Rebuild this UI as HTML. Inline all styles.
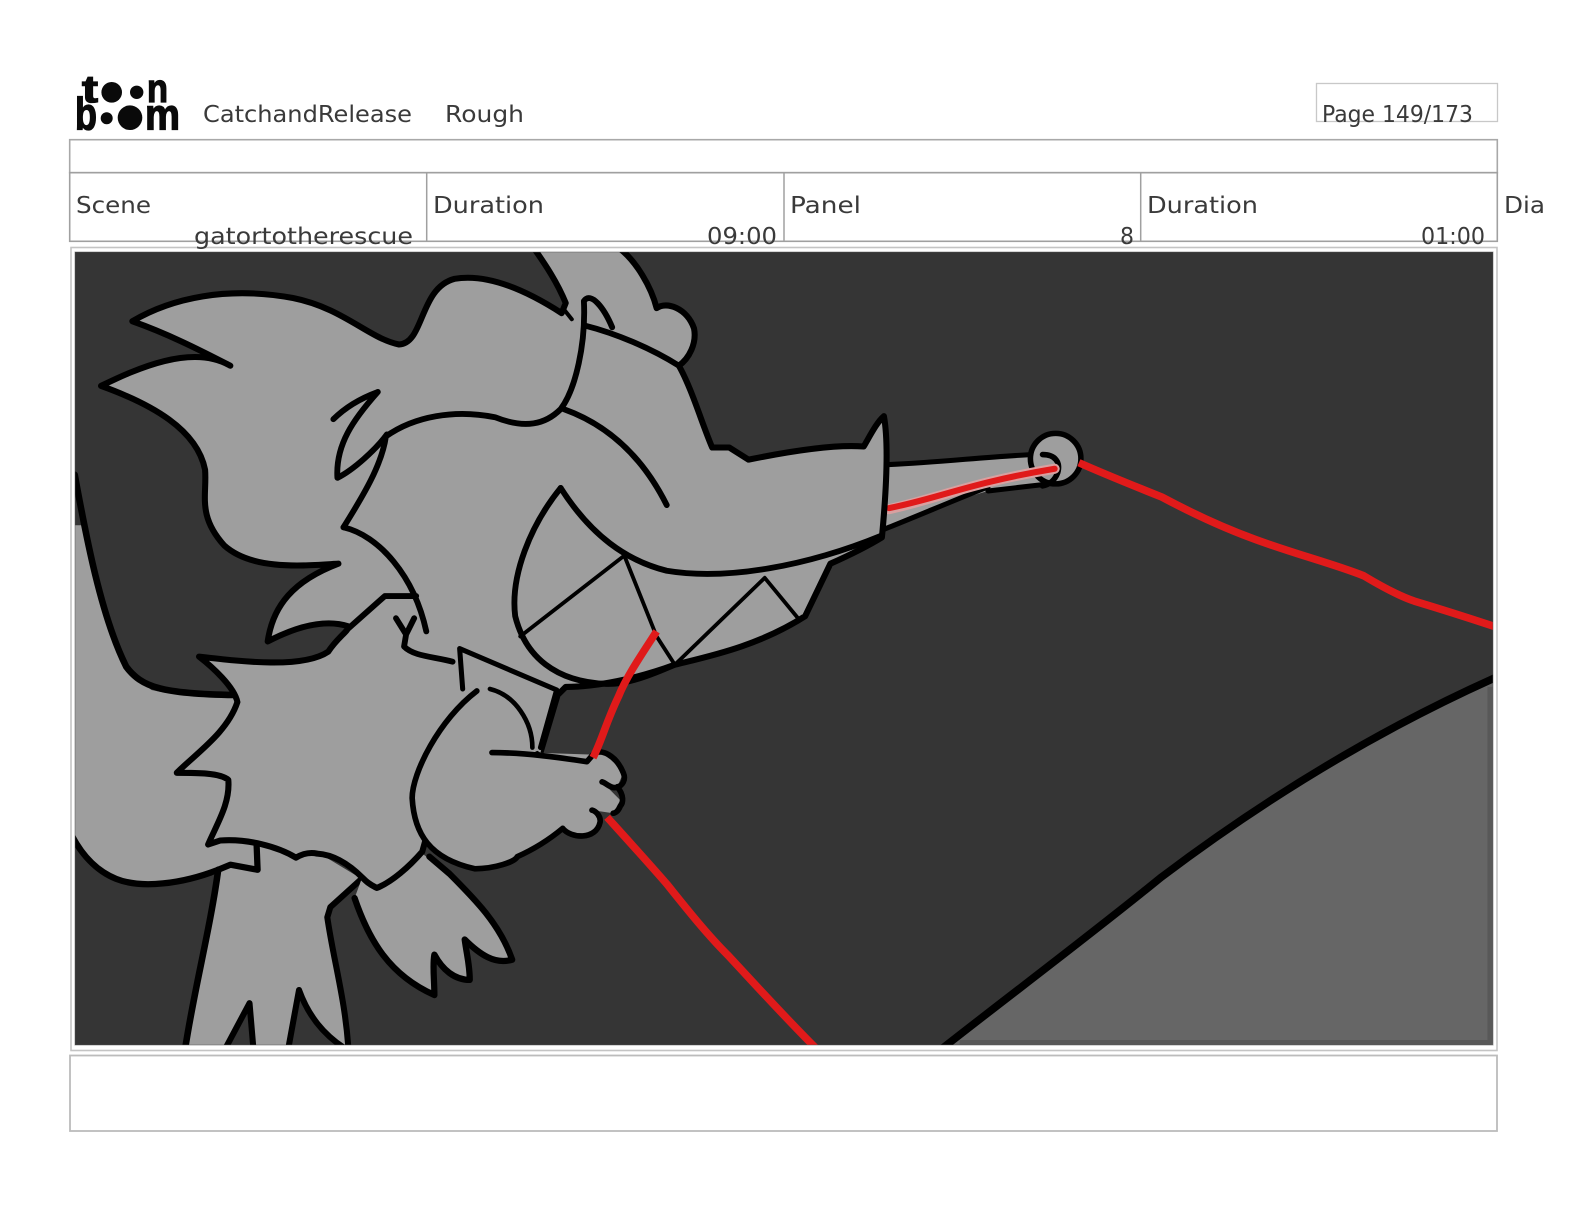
<!DOCTYPE html>
<html><head><meta charset="utf-8"><title>Storyboard page</title>
<style>html,body{margin:0;padding:0;background:#fff;width:1584px;height:1224px;overflow:hidden}svg{display:block}
text{font-family:"Liberation Sans",sans-serif;fill:#3a3a3a;font-size:23px}
.l{font-family:"DejaVu Sans","Liberation Sans",sans-serif;font-size:23px}
.b{font-family:"Liberation Sans",sans-serif;font-weight:bold;fill:#0a0a0a;stroke:#0a0a0a;stroke-width:1.3px}</style></head>
<body>
<svg width="1584" height="1224" viewBox="0 0 1584 1224" xmlns="http://www.w3.org/2000/svg">
<defs><clipPath id="c"><rect x="75" y="252" width="1418" height="793"/></clipPath></defs>
<rect width="1584" height="1224" fill="#fff"/>

<!-- logo -->
<g>
<text class="b" x="82" y="102" style="font-size:38px" textLength="16" lengthAdjust="spacingAndGlyphs">t</text>
<circle cx="111.7" cy="92.3" r="10.3" fill="#0a0a0a"/><circle cx="136.7" cy="92.3" r="6.7" fill="#0a0a0a"/>
<text class="b" x="147" y="102" style="font-size:40px" textLength="21" lengthAdjust="spacingAndGlyphs">n</text>
<text class="b" x="75" y="129.5" style="font-size:45px" textLength="22" lengthAdjust="spacingAndGlyphs">b</text>
<circle cx="106.7" cy="118.3" r="6" fill="#0a0a0a"/><circle cx="130" cy="117.7" r="12.3" fill="#0a0a0a"/>
<text class="b" x="145" y="129.5" style="font-size:44px" textLength="35" lengthAdjust="spacingAndGlyphs">m</text>
</g>

<!-- header boxes -->
<g fill="none">
<rect x="1316.5" y="83.5" width="181" height="38" stroke="#c8c8c8" stroke-width="1.3"/>
<rect x="69.7" y="139.7" width="1427.6" height="33" stroke="#a8a8a8" stroke-width="1.6"/>
<rect x="69.7" y="172.7" width="1427.6" height="68.6" stroke="#a0a0a0" stroke-width="1.6"/>
<path d="M426.7 173V241M784 173V241M1140.7 173V241" stroke="#a0a0a0" stroke-width="1.5"/>
<rect x="71" y="247.5" width="1426" height="803" stroke="#c4c4c4" stroke-width="1.6"/>
<rect x="70" y="1055.5" width="1427" height="75.5" stroke="#bcbcbc" stroke-width="1.8"/>
</g>

<!-- header text -->
<text class="l" x="203" y="122" textLength="209" lengthAdjust="spacingAndGlyphs">CatchandRelease</text>
<text class="l" x="445" y="122" textLength="79" lengthAdjust="spacingAndGlyphs">Rough</text>
<text class="l" x="1322" y="122" textLength="151" lengthAdjust="spacingAndGlyphs">Page 149/173</text>
<text class="l" x="76" y="213" textLength="75" lengthAdjust="spacingAndGlyphs">Scene</text>
<text class="l" x="433" y="213" textLength="111" lengthAdjust="spacingAndGlyphs">Duration</text>
<text class="l" x="790" y="213" textLength="71" lengthAdjust="spacingAndGlyphs">Panel</text>
<text class="l" x="1147" y="213" textLength="111" lengthAdjust="spacingAndGlyphs">Duration</text>
<text class="l" x="1504" y="213" textLength="41" lengthAdjust="spacingAndGlyphs">Dia</text>
<text class="l" x="194" y="244" textLength="219" lengthAdjust="spacingAndGlyphs">gatortotherescue</text>
<text class="l" x="707" y="244" textLength="70" lengthAdjust="spacingAndGlyphs">09:00</text>
<text class="l" x="1120" y="244" textLength="14" lengthAdjust="spacingAndGlyphs">8</text>
<text class="l" x="1421" y="244" textLength="64" lengthAdjust="spacingAndGlyphs">01:00</text>

<!-- artwork -->
<g clip-path="url(#c)">
<rect x="75" y="252" width="1418" height="793" fill="#353535"/>
<g transform="scale(1.0102)" stroke-linejoin="round" stroke-linecap="round">
 <!-- ground -->
 <path d="M930 1040C1000 985 1080 925 1150 868C1260 785 1370 720 1482 670V1040Z" fill="#666" stroke="none"/>
 <path d="M1475 680V1032H950" stroke="#585858" stroke-width="5" fill="none" stroke-linecap="butt"/>
 <path d="M930 1040C1000 985 1080 925 1150 868C1260 785 1370 720 1482 670" fill="none" stroke="#000" stroke-width="7.5"/>

 <!-- left tail -->
 <path d="M70 520H85C95 590 115 660 150 683C180 690 205 688 232 688L260 860L215 865C180 875 140 880 115 870C95 860 80 845 70 825Z" fill="#9e9e9e"/>
 <path d="M74 470C85 530 100 610 125 660C140 680 160 687 232 688" fill="none" stroke="#000" stroke-width="6.5"/>

 <!-- leg -->
 <path d="M216 861C208 920 192 980 183 1040H222L247 993L251 1040H285L296 980C305 1005 320 1025 345 1040C342 990 330 950 324 908L327 898L359 869L373 879L300 835L230 835Z" fill="#9e9e9e"/>
 <path d="M216 861C208 920 192 980 183 1040" fill="none" stroke="#000" stroke-width="6.5"/>
 <path d="M222 1040L247 993L251 1040M285 1040L296 980C305 1005 320 1025 345 1040C342 990 330 950 324 908L327 898L359 869" fill="none" stroke="#000" stroke-width="6"/>
 <path d="M70 825C80 845 95 862 115 870C140 880 180 875 216 861L228 856L255 861L254 836" fill="none" stroke="#000" stroke-width="6.2"/>

 <!-- wing -->
 <path d="M351 889L358 870L375 880L418 845L445 865C470 890 495 915 507 950C490 955 475 945 460 930C462 945 465 955 465 970C450 970 438 960 430 945C428 955 430 970 430 985C385 965 365 930 351 889Z" fill="#9e9e9e"/>
 <path d="M351 889C365 930 385 965 430 985C430 970 428 955 430 945C438 960 450 970 465 970C465 955 462 945 460 930C475 945 490 955 507 950C495 915 470 890 445 865L425 848" fill="none" stroke="#000" stroke-width="6.2"/>

 <!-- rope -->
 <path d="M877 460C930 458 975 452 1022 450L1045 480L978 486C945 495 910 510 875 524Z" fill="#9e9e9e"/>
 <path d="M877 460C930 458 975 452 1022 450M875 524C910 510 945 495 978 482M978 486L1030 480" fill="none" stroke="#000" stroke-width="5"/>
 <circle cx="1045" cy="454" r="25" fill="#9e9e9e" stroke="#000" stroke-width="5.5"/>
 <path d="M1032 450C1045 450 1050 458 1047 468C1044 476 1038 480 1032 481" fill="none" stroke="#000" stroke-width="5.5"/>
 <path d="M880 504C930 493 960 478 1044 464" fill="none" stroke="#d9a0a0" stroke-width="10"/>
 <path d="M880 503C930 493 960 478 1044 464" fill="none" stroke="#e01a1a" stroke-width="6"/>

 <!-- main body -->
 <path d="M131 318C170 295 225 283 290 295C340 305 365 335 395 341C420 340 415 285 450 276C485 270 525 290 556 310L560 300C552 280 540 262 528 245L612 245C630 258 645 285 650 305C660 298 680 305 687 325C690 340 682 355 672 362C685 385 695 420 705 443L722 443L741 455C790 445 830 440 855 442C862 430 868 418 875 412C880 440 877 490 873 532C860 540 840 550 822 558L797 610C750 640 700 650 668 658C630 672 590 680 560 680L552 688L535 745L430 800L418 843C405 858 388 873 373 879C365 875 362 872 359 869C345 855 330 846 314 845C305 843 298 846 293 849C275 838 245 830 218 832L206 836C215 815 228 795 226 772C218 765 195 765 175 765C195 745 225 725 235 695C232 680 210 660 197 650C240 655 300 662 325 645C335 630 345 625 345 620C320 612 290 622 265 635C270 600 290 575 335 558C300 560 250 565 222 540C195 510 205 490 203 465C195 425 150 400 100 382C135 365 190 340 228 362C195 345 165 330 131 318Z" fill="#9e9e9e" stroke="#000" stroke-width="6"/>

 <!-- head lines -->
 <g fill="none" stroke="#000" stroke-width="5.8">
  <path d="M340 522C360 490 378 460 382 432C410 412 450 405 490 413C520 425 540 420 555 405C570 385 580 340 578 298C585 288 598 305 606 324"/>
  <path d="M578 322C610 330 645 345 672 362"/>
  <path d="M558 405C600 420 635 450 660 500"/>
  <path d="M374 388C355 395 340 405 330 415M374 388C350 415 332 440 334 473C350 465 372 445 383 430"/>
  <path d="M340 522C375 530 410 570 422 625"/>
  <path d="M381 590H412M345 622L381 590"/>
  <path d="M392 612L402 628L410 612M402 628L400 640C410 650 430 650 448 655"/>
  <path d="M555 483C525 520 505 570 510 610C520 650 550 675 600 677C620 678 645 668 668 658"/>
  <path d="M555 483C585 530 620 555 660 565C720 575 800 560 873 530"/>
 </g>
 <path d="M558 306L566 316" fill="none" stroke="#000" stroke-width="4"/>
 <g fill="none" stroke="#000" stroke-width="3.8">
  <path d="M515 630L618 550L650 630L668 658L757 572L790 612"/>
 </g>
 <path d="M822 558L797 610" fill="none" stroke="#000" stroke-width="5.5"/>

 <!-- collar and arm -->
 <path d="M455 642L551 683L535 745L458 700Z" fill="#9e9e9e"/>
 <path d="M458 682L455 642L551 683L535 740" fill="none" stroke="#000" stroke-width="5"/>
 <path d="M470 684C430 715 408 770 408 790C410 825 425 850 470 860C490 860 512 848 512 848C530 840 545 830 557 820C565 830 590 830 594 814L586 802L607 805L614 792L596 774L611 779L617 765C610 750 595 740 587 747L527 745C525 710 510 690 485 684Z" fill="#9e9e9e"/>
 <g fill="none" stroke="#000" stroke-width="5.6">
  <path d="M472 684C435 712 408 765 408 790C410 825 425 850 470 860C490 860 510 853 512 848C530 840 545 830 557 820C565 830 590 832 594 814C595 808 590 803 586 802"/>
  <path d="M587 747C595 740 610 748 617 765C620 772 616 778 611 779C606 782 600 775 596 774"/>
  <path d="M611 779C618 787 617 795 614 798C612 803 609 805 607 805"/>
  <path d="M487 745C520 745 555 750 581 754L587 747"/>
  <path d="M485 682C510 688 527 715 527 740" stroke-width="4.6"/>
 </g>

 <!-- red lines -->
 <g fill="none" stroke="#e01a1a" stroke-width="7.5" stroke-linecap="butt">
  <path d="M1068 458C1095 470 1125 482 1150 492C1180 508 1210 522 1240 533C1280 548 1320 558 1350 570C1370 582 1385 590 1400 595C1430 604 1455 612 1485 622"/>
  <path d="M650 625C635 648 620 670 612 690C600 715 595 735 587 750"/>
  <path d="M601 809C620 830 640 852 660 875C680 900 700 925 720 945C748 975 775 1005 810 1040"/>
 </g>
</g>
</g>
<rect x="75" y="252" width="1418" height="793" fill="none" stroke="#555" stroke-width="1" opacity=".5"/>
</svg>
</body></html>
